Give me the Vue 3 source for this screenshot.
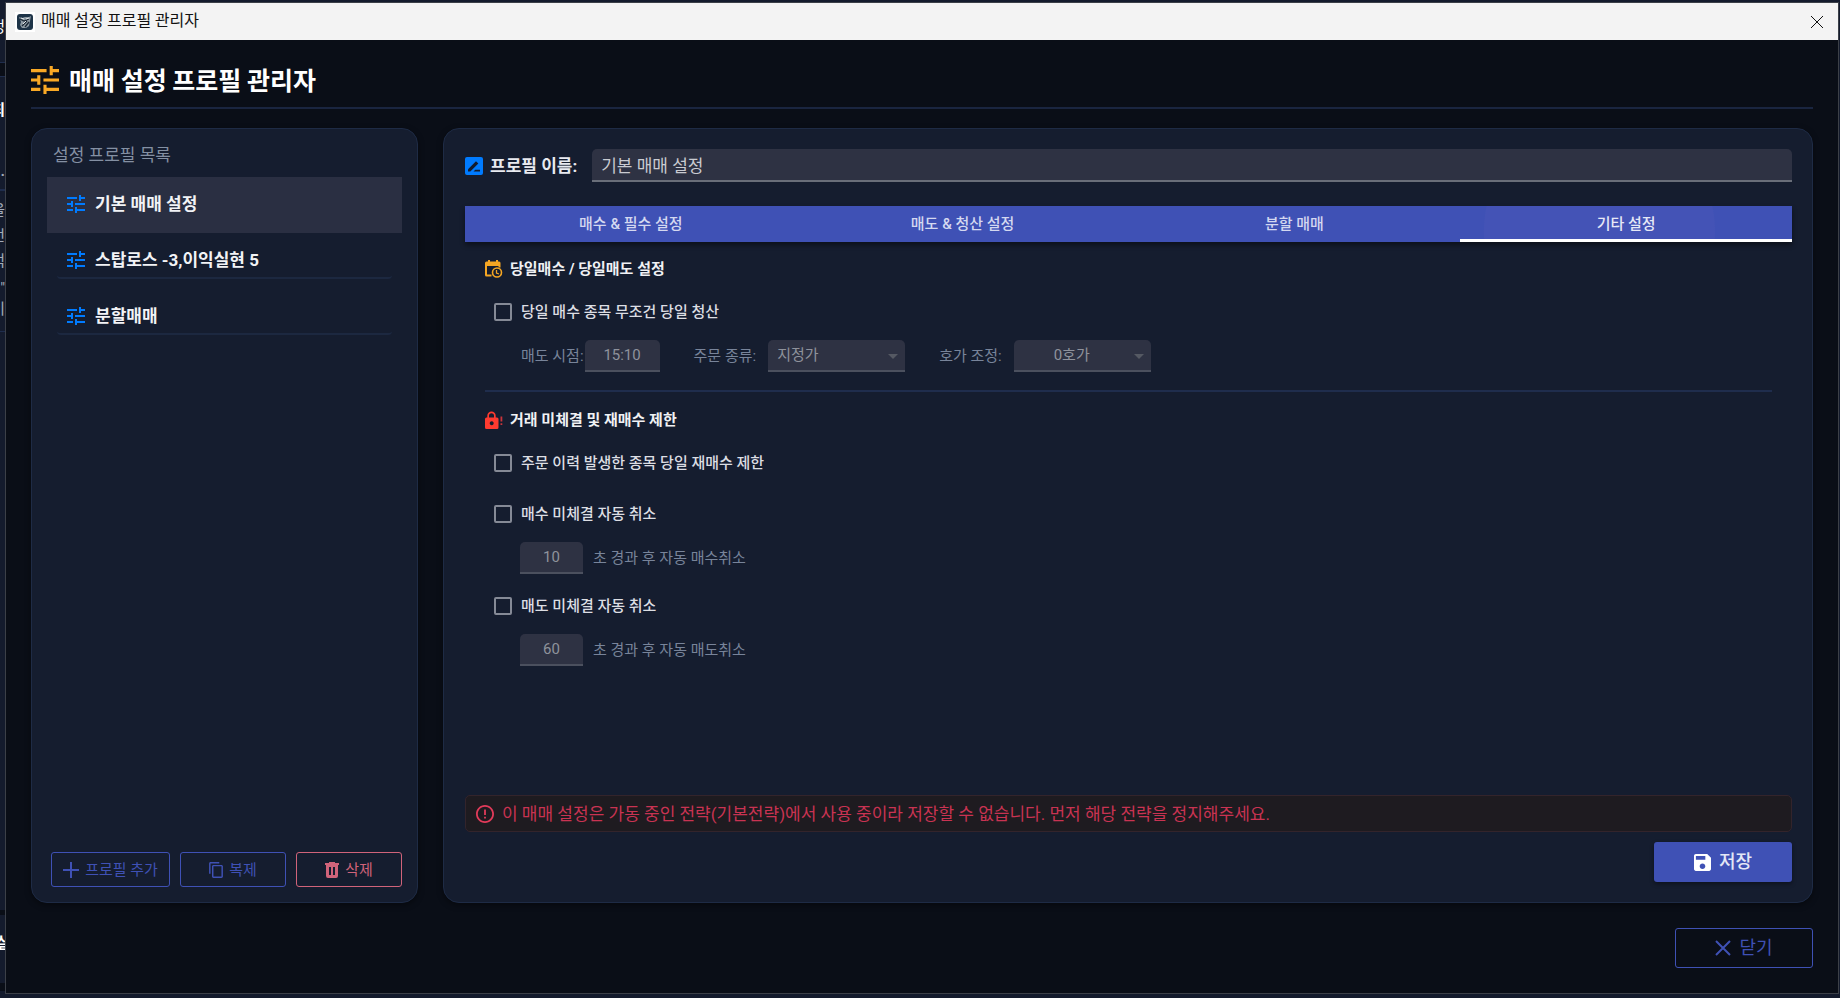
<script setup>
import { ref } from 'vue'

const profiles = ref([
    { id: 1, name: '기본 매매 설정' },
    { id: 2, name: '스탑로스 -3,이익실현 5' },
    { id: 3, name: '분할매매' }
])
const selectedId = ref(1)
const profileName = ref('기본 매매 설정')

const tabs = ['매수 & 필수 설정', '매도 & 청산 설정', '분할 매매', '기타 설정']
const activeTab = ref(3)

const sameDaySell = ref(false)
const sellTime = ref('15:10')
const orderType = ref('지정가')
const tickOffset = ref('0호가')

const blockRebuy = ref(false)
const cancelBuy = ref(false)
const cancelBuySec = ref('10')
const cancelSell = ref(false)
const cancelSellSec = ref('60')

const tunePath = 'M3 17v2h6v-2H3zM3 5v2h10V5H3zm10 16v-2h8v-2h-8v-2h-2v6h2zM7 9v2H3v2h4v2h2V9H7zm14 4v-2H11v2h10zm-6-4h2V7h4V5h-4V3h-2v6z'
</script>

<template>
    <div class="desktop">
        <!-- main window peeking out behind the dialog -->
        <div class="behind" aria-hidden="true">
            <span class="peek peek-title">정</span>
            <span class="peek peek-head">최</span>
            <span class="peek peek-a">·</span>
            <span class="peek peek-b">을</span>
            <span class="peek peek-c">언</span>
            <span class="peek peek-d">먹</span>
            <span class="peek peek-e">"</span>
            <span class="peek peek-f">미</span>
            <span class="peek peek-g">실</span>
        </div>

        <div class="window">
            <div class="titlebar">
                <svg class="app-icon" viewBox="0 0 20 20">
                    <rect width="20" height="20" fill="#fff" />
                    <rect x="2" y="2" width="16" height="16" rx="3" fill="#1d3347" />
                    <path d="M4 5l3 1 3-1 4 0 2-1-1 5-1 5-3 2H7l-2-3 1-3z" fill="#8d9aa3" />
                    <path d="M5 7l4 2 5-2M7 14l5-5M10 15l4-5" stroke="#1a2733" stroke-width="1.3" fill="none" />
                    <path d="M6 6l3 1M11 7l3-1M8 12l3-3" stroke="#e1e5e8" fill="none" />
                </svg>
                <span class="titlebar-text">매매 설정 프로필 관리자</span>
                <button class="titlebar-close" type="button" aria-label="닫기">
                    <svg viewBox="0 0 12 12"><path d="M0 0l12 12M12 0L0 12" /></svg>
                </button>
            </div>

            <div class="body">
                <header class="header">
                    <svg class="header-icon" viewBox="3 3 18 18"><path :d="tunePath" /></svg>
                    <h1>매매 설정 프로필 관리자</h1>
                </header>

                <div class="columns">
                    <aside class="panel sidebar">
                        <h2>설정 프로필 목록</h2>
                        <ul class="profiles">
                            <li v-for="p in profiles" :key="p.id">
                                <button
                                    type="button"
                                    :class="['profile', { selected: p.id === selectedId }]"
                                    @click="selectedId = p.id"
                                >
                                    <span class="profile-inner">
                                        <svg viewBox="3 3 18 18"><path :d="tunePath" /></svg>
                                        {{ p.name }}
                                    </span>
                                </button>
                            </li>
                        </ul>
                        <div class="sidebar-actions">
                            <button type="button" class="btn outline add">
                                <svg class="icon-add" viewBox="0 0 16 16"><path d="M7 0h2v7h7v2H9v7H7V9H0V7h7z" /></svg>
                                프로필 추가
                            </button>
                            <button type="button" class="btn outline">
                                <svg class="icon-copy" viewBox="2 1 19 22">
                                    <path d="M16 1H4c-1.100 0-2 .9-2 2v14h2V3h12V1zm3 4H8c-1.100 0-2 .9-2 2v14c0 1.100.9 2 2 2h11c1.100 0 2-.9 2-2V7c0-1.100-.9-2-2-2zm0 16H8V7h11v14z" />
                                </svg>
                                복제
                            </button>
                            <button type="button" class="btn outline danger">
                                <svg class="icon-trash" viewBox="0 0 14 16">
                                    <path fill-rule="evenodd" d="M4 0h6v1h4v2H0V1h4zM1 3h12v11a2 2 0 0 1-2 2H3a2 2 0 0 1-2-2zM4 5v8h2V5zM8 5v8h2V5z" />
                                </svg>
                                삭제
                            </button>
                        </div>
                    </aside>

                    <main class="panel editor">
                        <div class="name-row">
                            <svg class="name-icon" viewBox="0 0 18 18">
                                <rect width="18" height="18" rx="2" fill="#007bff" />
                                <path d="M3 14.500v-2.300L11 4.200l2.300 2.300-8 8z" fill="#131c2e" />
                                <path d="M8.500 14.500l1.800-1.800H15v1.800z" fill="#131c2e" />
                            </svg>
                            <label for="profile-name">프로필 이름:</label>
                            <input id="profile-name" v-model="profileName" type="text" class="field name-input">
                        </div>

                        <div class="tabs" role="tablist">
                            <button
                                v-for="(tab, i) in tabs"
                                :key="tab"
                                type="button"
                                role="tab"
                                :aria-selected="i === activeTab"
                                :class="['tab', { active: i === activeTab }]"
                                @click="activeTab = i"
                            >
                                {{ tab }}
                            </button>
                        </div>

                        <div class="content">
                            <section class="section first">
                                <h3>
                                    <svg viewBox="0 0 18 18">
                                        <path fill="#f5a623" fill-rule="evenodd" d="M3 0h2v1.500h6V0h2v1.500h1A1.500 1.500 0 0 1 15.500 3v4.500h-2V6H2v8.500h4.500v2H1.500A1.500 1.500 0 0 1 0 15V3a1.500 1.500 0 0 1 1.500-1.500H3z" />
                                        <circle cx="12" cy="12.500" r="4.500" fill="none" stroke="#f5a623" stroke-width="1.600" />
                                        <path d="M11.500 10v3l2.500 1" fill="none" stroke="#f5a623" stroke-width="1.300" />
                                    </svg>
                                    당일매수 / 당일매도 설정
                                </h3>
                                <label class="check">
                                    <input v-model="sameDaySell" type="checkbox">
                                    당일 매수 종목 무조건 당일 청산
                                </label>
                                <div class="fields">
                                    <div class="pair time">
                                        <label for="sell-time">매도 시점:</label>
                                        <input id="sell-time" v-model="sellTime" type="text" class="field center w-time" disabled>
                                    </div>
                                    <div class="pair">
                                        <label for="order-type">주문 종류:</label>
                                        <span class="select">
                                            <select id="order-type" v-model="orderType" class="field" disabled>
                                                <option>지정가</option>
                                                <option>시장가</option>
                                            </select>
                                            <svg viewBox="0 0 10 5"><path d="M0 0h10L5 5z" /></svg>
                                        </span>
                                    </div>
                                    <div class="pair">
                                        <label for="tick-offset">호가 조정:</label>
                                        <span class="select">
                                            <select id="tick-offset" v-model="tickOffset" class="field center" disabled>
                                                <option>0호가</option>
                                                <option>1호가</option>
                                            </select>
                                            <svg viewBox="0 0 10 5"><path d="M0 0h10L5 5z" /></svg>
                                        </span>
                                    </div>
                                </div>
                            </section>

                            <section class="section">
                                <h3>
                                    <svg viewBox="0 0 18 18">
                                        <path fill="#ff3b30" fill-rule="evenodd" d="M1.500 6.500h.8V4.700a4.200 4.200 0 0 1 8.400 0v1.800h1.300a1.500 1.500 0 0 1 1.500 1.500v8.500a1.500 1.500 0 0 1-1.500 1.500h-10.500A1.500 1.500 0 0 1 0 16.500V8a1.500 1.500 0 0 1 1.500-1.500zM4 6.500h5V4.700a2.500 2.500 0 0 0-5 0zM6.700 10.300a2 2 0 1 0 .01 0z" />
                                        <path fill="#c9343a" d="M15.500 5.500h1.800v5h-1.800zM15.500 12.200h1.800v1.800h-1.800z" />
                                    </svg>
                                    거래 미체결 및 재매수 제한
                                </h3>
                                <label class="check">
                                    <input v-model="blockRebuy" type="checkbox">
                                    주문 이력 발생한 종목 당일 재매수 제한
                                </label>
                                <label class="check spaced">
                                    <input v-model="cancelBuy" type="checkbox">
                                    매수 미체결 자동 취소
                                </label>
                                <div class="fields seconds">
                                    <input id="buy-sec" v-model="cancelBuySec" type="text" class="field center w-sec" disabled>
                                    <label for="buy-sec">초 경과 후 자동 매수취소</label>
                                </div>
                                <label class="check">
                                    <input v-model="cancelSell" type="checkbox">
                                    매도 미체결 자동 취소
                                </label>
                                <div class="fields seconds">
                                    <input id="sell-sec" v-model="cancelSellSec" type="text" class="field center w-sec" disabled>
                                    <label for="sell-sec">초 경과 후 자동 매도취소</label>
                                </div>
                            </section>
                        </div>

                        <p class="alert" role="alert">
                            <svg viewBox="2 2 20 20">
                                <path d="M11 15h2v2h-2zm0-8h2v6h-2zm.99-5C6.470 2 2 6.480 2 12s4.470 10 9.990 10C17.520 22 22 17.520 22 12S17.520 2 11.990 2zM12 20c-4.420 0-8-3.580-8-8s3.580-8 8-8 8 3.580 8 8-3.580 8-8 8z" />
                            </svg>
                            이 매매 설정은 가동 중인 전략(기본전략)에서 사용 중이라 저장할 수 없습니다. 먼저 해당 전략을 정지해주세요.
                        </p>

                        <button type="button" class="btn large save">
                            <svg class="icon-save" viewBox="3 3 18 18">
                                <path d="M17 3H5c-1.110 0-2 .9-2 2v14c0 1.100.89 2 2 2h14c1.100 0 2-.9 2-2V7l-4-4zm-5 16c-1.660 0-3-1.340-3-3s1.340-3 3-3 3 1.340 3 3-1.340 3-3 3zm3-10H5V5h10v4z" />
                            </svg>
                            저장
                        </button>
                    </main>
                </div>

                <footer class="footer">
                    <button type="button" class="btn outline large">
                        <svg class="icon-close" viewBox="0 0 16 16"><path d="M1 1l14 14M15 1L1 15" /></svg>
                        닫기
                    </button>
                </footer>
            </div>
        </div>
    </div>
</template>

<style>
body {
    margin: 0;
    background: #141b2d;
}
</style>

<style scoped>
* {
    box-sizing: border-box;
}

.desktop {
    position: relative;
    display: flex;
    min-height: 100vh;
    padding: 2px 1px 4px 5px;
    background: #141b2d;
    color: #e8eaf0;
    font-family: Roboto, "Noto Sans CJK KR", sans-serif;
    font-size: 15px;
    line-height: 24px;
}

.behind {
    position: absolute;
    top: 0;
    bottom: 0;
    left: 0;
    width: 5px;
    overflow: hidden;
    background:
        linear-gradient(#1f2d4d, #1f2d4d) 0 62px / 100% 1px no-repeat,
        linear-gradient(#0a0e17, #0a0e17) 0 63px / 100% 13px no-repeat,
        linear-gradient(#1f2d4d, #1f2d4d) 0 76px / 100% 1px no-repeat,
        linear-gradient(#1f2d4d, #1f2d4d) 0 189px / 100% 2px no-repeat,
        linear-gradient(#1f2d4d, #1f2d4d) 0 331px / 100% 1px no-repeat,
        linear-gradient(#0a0e17, #0a0e17) 0 910px / 100% 5px no-repeat,
        linear-gradient(#0a0e17, #0a0e17) 0 983px / 100% 8px no-repeat,
        #141b2d;
}

.peek {
    position: absolute;
    right: 0;
    color: #a3abba;
}

.peek-title { top: 15px; color: #fff; }
.peek-head { top: 98px; color: #fff; font-weight: 700; }
.peek-a { top: 163px; font-weight: 700; }
.peek-b { top: 198px; }
.peek-c { top: 224px; }
.peek-d { top: 249px; }
.peek-e { top: 276px; }
.peek-f { top: 297px; }
.peek-g { top: 931px; right: -5px; color: #fff; font-weight: 700; }

.window {
    position: relative;
    display: flex;
    flex: 1;
    flex-direction: column;
    border: 1px solid #3c4048;
    background: #0a0e17;
}

.titlebar {
    display: flex;
    align-items: center;
    height: 37px;
    padding: 0 15px 0 9px;
    background: #f3f3f3;
    color: #111;
    font-family: "Noto Sans CJK KR", sans-serif;
}

.app-icon {
    width: 20px;
    height: 20px;
    margin-right: 6px;
}

.titlebar-text {
    flex: 1;
    padding-bottom: 5px;
    font-size: 16px;
}

.titlebar-close {
    display: flex;
    padding: 0;
    border: 0;
    background: none;
}

.titlebar-close svg {
    width: 12px;
    height: 12px;
    overflow: visible;
    stroke: #111;
}

.body {
    display: flex;
    flex: 1;
    flex-direction: column;
    padding: 22px 25px 25px;
}

.header {
    display: flex;
    align-items: center;
    gap: 10px;
    padding-bottom: 9px;
    border-bottom: 2px solid #1a2540;
}

.header-icon {
    width: 28px;
    height: 28px;
    fill: #f9a825;
}

h1, h2, h3, p, ul {
    margin: 0;
    padding: 0;
}

h1 {
    padding-bottom: 2px;
    color: #fff;
    font-family: "Noto Sans CJK KR", sans-serif;
    font-size: 25px;
    font-weight: 700;
    line-height: 34px;
}

.columns {
    display: flex;
    flex: 1;
    gap: 25px;
    margin-top: 19px;
}

.panel {
    display: flex;
    flex-direction: column;
    border: 1px solid #1e2b45;
    border-radius: 16px;
    background: #151d2f;
    box-shadow: 0 2px 6px rgba(0, 0, 0, 0.4);
}

.sidebar {
    width: 387px;
    padding: 14px 15px 15px;
}

h2 {
    padding: 0 6px 10px;
    color: #8490a3;
    font-size: 17px;
    font-weight: 400;
}

.profiles {
    flex: 1;
    list-style: none;
}

.profile {
    display: block;
    width: 100%;
    height: 56px;
    padding: 10px;
    border: 0;
    background: none;
    color: #f2f3f6;
    font: inherit;
    font-size: 17px;
    font-weight: 700;
    text-align: left;
}

.profile-inner {
    display: flex;
    align-items: center;
    gap: 10px;
    height: 36px;
    padding-left: 10px;
    border-bottom: 2px solid #1c2840;
    border-radius: 4px;
}

.profile.selected {
    background: #2a2f42;
}

.profile.selected .profile-inner {
    border-color: transparent;
}

.profile svg {
    width: 18px;
    height: 18px;
    fill: #007bff;
}

.sidebar-actions {
    display: flex;
    gap: 10px;
    padding-left: 4px;
}

.btn {
    display: flex;
    flex: 1;
    align-items: center;
    justify-content: center;
    gap: 6px;
    height: 35px;
    padding: 0;
    border: 0;
    border-radius: 3px;
    background: none;
    font: inherit;
    line-height: 24px;
    white-space: nowrap;
}

.btn svg {
    flex: none;
    fill: currentColor;
}

.outline {
    border: 1px solid #3f51b5;
    color: #3f51b5;
}

.add {
    flex: 0 0 119px;
}

.danger {
    border-color: #d0637a;
    color: #d0637a;
}

.icon-add {
    width: 16px;
    height: 16px;
}

.icon-copy {
    width: 14px;
    height: 16px;
}

.icon-trash {
    width: 14px;
    height: 16px;
}

.large {
    flex: none;
    gap: 8px;
    width: 138px;
    height: 40px;
    font-size: 18px;
}

.editor {
    flex: 1;
    padding: 20px 20px 20px 21px;
}

.name-row {
    display: flex;
    align-items: center;
    gap: 7px;
    font-size: 17px;
}

.name-row label {
    flex: none;
    font-weight: 700;
}

.name-icon {
    width: 18px;
    height: 18px;
}

.field {
    height: 32px;
    padding: 0 9px;
    border: 0;
    border-bottom: 2px solid #4b505e;
    border-radius: 5px 5px 0 0;
    background: #2e3243;
    color: #8f929c;
    font: inherit;
    opacity: 1;
    appearance: none;
}

.name-input {
    flex: 1;
    min-width: 0;
    height: 33px;
    margin-left: 8px;
    border-color: #696e79;
    color: #c9cbd1;
}

.center {
    text-align: center;
    text-align-last: center;
}

.tabs {
    display: flex;
    margin-top: 24px;
    background: #3f51b5;
    box-shadow: 0 3px 5px rgba(0, 0, 0, 0.45);
}

.tab {
    flex: 1;
    height: 36px;
    padding: 0;
    border: 0;
    border-bottom: 3px solid transparent;
    border-top: 3px solid transparent;
    background: none;
    color: #d4d8f0;
    font: inherit;
    font-weight: 500;
}

.tab.active {
    border-bottom-color: #fff;
    background: radial-gradient(circle at 42% 70%, #4453b6 115px, transparent 116px) border-box;
    color: #e6e8f6;
}

.content {
    flex: 1;
    padding: 0 20px;
}

.section {
    padding-top: 16px;
}

.section.first {
    padding: 15px 0 18px;
    border-bottom: 2px solid #1f2d4d;
}

h3 {
    display: flex;
    align-items: center;
    gap: 7px;
    margin-bottom: 19px;
    color: #f0f1f4;
    font-size: 15px;
    font-weight: 700;
}

h3 svg {
    width: 18px;
    height: 18px;
}

.check {
    display: flex;
    align-items: center;
    gap: 9px;
    width: fit-content;
    padding-left: 9px;
    color: #dcdee3;
    font-weight: 500;
}

.check input {
    width: 18px;
    height: 18px;
    margin: 0;
    border: 2px solid #858a96;
    border-radius: 2px;
    appearance: none;
}

.check input:checked {
    background: #3f51b5;
}

.spaced {
    margin-top: 27px;
}

.fields {
    display: flex;
    align-items: center;
    gap: 34px;
    padding: 16px 0 0 36px;
    color: #78849a;
}

.seconds {
    gap: 10px;
    padding: 16px 0 20px 35px;
}

.pair {
    display: flex;
    align-items: center;
    gap: 12px;
}

.pair.time {
    gap: 1px;
}

.w-time {
    width: 75px;
}

.w-sec {
    width: 63px;
}

.select {
    position: relative;
    display: flex;
}

.select .field {
    width: 137px;
}

.select .center {
    padding-right: 30px;
}

.select svg {
    position: absolute;
    top: 14px;
    right: 7px;
    width: 10px;
    height: 5px;
    fill: #555963;
    pointer-events: none;
}

.alert {
    display: flex;
    align-items: center;
    gap: 8px;
    height: 37px;
    padding: 0 10px;
    border: 1px solid #33242b;
    border-radius: 5px;
    background: #1e1b20;
    color: #c93352;
    font-size: 17px;
}

.alert svg {
    flex: none;
    width: 18px;
    height: 18px;
    fill: #e23b5a;
}

.save {
    align-self: flex-end;
    margin-top: 10px;
    background: #3f51b5;
    box-shadow: 0 2px 4px rgba(0, 0, 0, 0.4);
    color: #e4e7f6;
    font-weight: 500;
}

.icon-save {
    width: 17px;
    height: 17px;
    color: #fff;
}

.footer {
    display: flex;
    justify-content: flex-end;
    margin-top: 25px;
}

.icon-close {
    width: 16px;
    height: 16px;
    stroke: currentColor;
    stroke-width: 2;
}
</style>
